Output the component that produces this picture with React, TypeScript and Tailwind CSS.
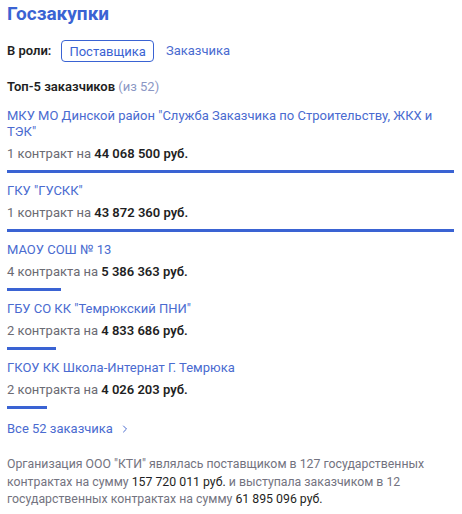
import { ChevronRight } from 'lucide-react';

const customers = [
  { name: 'МКУ МО Динской район "Служба Заказчика по Строительству, ЖКХ и ТЭК"', count: '1 контракт', sum: '44 068 500 руб.', width: 447 },
  { name: 'ГКУ "ГУСКК"', count: '1 контракт', sum: '43 872 360 руб.', width: 447 },
  { name: 'МАОУ СОШ № 13', count: '4 контракта', sum: '5 386 363 руб.', width: 54 },
  { name: 'ГБУ СО КК "Темрюкский ПНИ"', count: '2 контракта', sum: '4 833 686 руб.', width: 49 },
  { name: 'ГКОУ КК Школа-Интернат Г. Темрюка', count: '2 контракта', sum: '4 026 203 руб.', width: 40 },
];

export default function App() {
  return (
    <div className="w-[462px] min-h-[514px] bg-white px-[7px] pt-[1px] font-['Roboto',sans-serif] text-[#1f1f24]">
      <h1 className="text-[19px] font-bold text-[#3a63d3] leading-[26px]">Госзакупки</h1>

      <div className="flex items-center mt-[13px] text-[13px]">
        <span className="font-semibold">В роли:</span>
        <button className="ml-[10px] h-[22px] px-[7px] rounded-[4px] border border-[#3a63d3] text-[#3a63d3] leading-none">
          Поставщика
        </button>
        <span className="ml-[12px] text-[#4a6bd0]">Заказчика</span>
      </div>

      <div className="mt-[16px] text-[13px] leading-[18px]">
        <span className="font-semibold">Топ-5 заказчиков</span>{' '}
        <span className="text-[#8b97c4]">(из 52)</span>
      </div>

      <div className="mt-[12px]">
        {customers.map((c) => (
          <div key={c.name} className="pb-[10px]">
            <div className="text-[13px] leading-[16px] text-[#4a6bd0]">{c.name}</div>
            <div className="mt-[6px] text-[13px] leading-[16px] text-[#6b6b73]">
              {c.count} на <span className="font-semibold text-[#1f1f24]">{c.sum}</span>
            </div>
            <div className="mt-[8px] h-[3px] bg-[#3a63d3]" style={{ width: c.width }} />
          </div>
        ))}
      </div>

      <div className="flex items-center gap-[6px] text-[13px] leading-[16px] text-[#4a6bd0] mt-[2px]">
        Все 52 заказчика
        <ChevronRight size={12} strokeWidth={2} />
      </div>

      <p className="mt-[19px] text-[12.3px] leading-[17.5px] text-[#737380]">
        Организация ООО "КТИ" являлась поставщиком в 127 государственных контрактах на сумму{' '}
        <span className="text-[#1f1f24]">157 720 011 руб.</span> и выступала заказчиком в 12 государственных контрактах на сумму{' '}
        <span className="text-[#1f1f24]">61 895 096 руб.</span>
      </p>
    </div>
  );
}
